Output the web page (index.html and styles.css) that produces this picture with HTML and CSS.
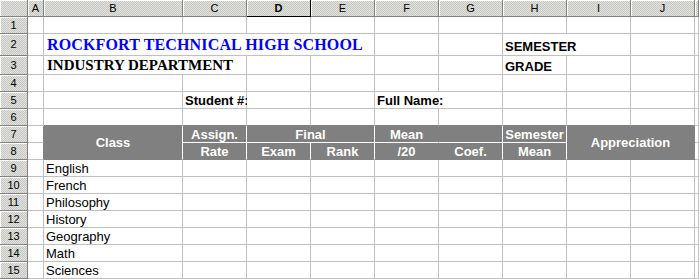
FILE: index.html
```html
<!DOCTYPE html>
<html>
<head>
<meta charset="utf-8">
<link rel="stylesheet" href="styles.css">
</head>
<body>
<div class="sheet">
  <div class="h corner"></div><div class="h">A</div><div class="h">B</div><div class="h">C</div><div class="h sel">D</div><div class="h">E</div><div class="h">F</div><div class="h">G</div><div class="h">H</div><div class="h">I</div><div class="h">J</div><div class="h"></div>

  <div class="r">1</div><div class="c"></div><div class="c"></div><div class="c"></div><div class="c"></div><div class="c"></div><div class="c"></div><div class="c"></div><div class="c"></div><div class="c"></div><div class="c"></div><div class="c"></div>

  <div class="r">2</div><div class="c"></div><div class="c s4 title">ROCKFORT TECHNICAL HIGH SCHOOL</div><div class="c"></div><div class="c"></div><div class="c s2 lbl up">SEMESTER</div><div class="c"></div><div class="c"></div>

  <div class="r">3</div><div class="c"></div><div class="c s2 dept">INDUSTRY DEPARTMENT</div><div class="c"></div><div class="c"></div><div class="c"></div><div class="c"></div><div class="c lbl">GRADE</div><div class="c"></div><div class="c"></div><div class="c"></div>

  <div class="r">4</div><div class="c"></div><div class="c"></div><div class="c"></div><div class="c"></div><div class="c"></div><div class="c"></div><div class="c"></div><div class="c"></div><div class="c"></div><div class="c"></div><div class="c"></div>

  <div class="r">5</div><div class="c"></div><div class="c"></div><div class="c lbl">Student #:</div><div class="c"></div><div class="c"></div><div class="c s2 lbl">Full Name:</div><div class="c"></div><div class="c"></div><div class="c"></div><div class="c"></div>

  <div class="r">6</div><div class="c"></div><div class="c ab"></div><div class="c ab"></div><div class="c ab"></div><div class="c ab"></div><div class="c ab"></div><div class="c ab"></div><div class="c ab"></div><div class="c ab"></div><div class="c ab"></div><div class="c"></div>

  <div class="r">7</div><div class="c ar"></div><div class="g rs2 mid nb">Class</div><div class="g">Assign.</div><div class="g s2">Final</div><div class="g nr">Mean</div><div class="g"></div><div class="g">Semester</div><div class="g s2 rs2 mid nr nb">Appreciation</div><div class="c"></div>

  <div class="r">8</div><div class="c ar"></div><div class="g nb">Rate</div><div class="g nb">Exam</div><div class="g nb">Rank</div><div class="g nb nr">/20</div><div class="g nb">Coef.</div><div class="g nb">Mean</div><div class="c"></div>

  <div class="r">9</div><div class="c"></div><div class="c">English</div><div class="c"></div><div class="c"></div><div class="c"></div><div class="c"></div><div class="c"></div><div class="c"></div><div class="c"></div><div class="c"></div><div class="c"></div>

  <div class="r">10</div><div class="c"></div><div class="c">French</div><div class="c"></div><div class="c"></div><div class="c"></div><div class="c"></div><div class="c"></div><div class="c"></div><div class="c"></div><div class="c"></div><div class="c"></div>

  <div class="r">11</div><div class="c"></div><div class="c">Philosophy</div><div class="c"></div><div class="c"></div><div class="c"></div><div class="c"></div><div class="c"></div><div class="c"></div><div class="c"></div><div class="c"></div><div class="c"></div>

  <div class="r">12</div><div class="c"></div><div class="c">History</div><div class="c"></div><div class="c"></div><div class="c"></div><div class="c"></div><div class="c"></div><div class="c"></div><div class="c"></div><div class="c"></div><div class="c"></div>

  <div class="r">13</div><div class="c"></div><div class="c">Geography</div><div class="c"></div><div class="c"></div><div class="c"></div><div class="c"></div><div class="c"></div><div class="c"></div><div class="c"></div><div class="c"></div><div class="c"></div>

  <div class="r">14</div><div class="c"></div><div class="c">Math</div><div class="c"></div><div class="c"></div><div class="c"></div><div class="c"></div><div class="c"></div><div class="c"></div><div class="c"></div><div class="c"></div><div class="c"></div>

  <div class="r">15</div><div class="c"></div><div class="c">Sciences</div><div class="c"></div><div class="c"></div><div class="c"></div><div class="c"></div><div class="c"></div><div class="c"></div><div class="c"></div><div class="c"></div><div class="c"></div>
</div>
</body>
</html>
```

FILE: styles.css
```css
html, body {
  margin: 0;
  padding: 0;
  background: #fff;
}
body {
  width: 699px;
  height: 279px;
  overflow: hidden;
}
.sheet {
  display: grid;
  grid-template-columns: 28px 16px 139px repeat(8, 64px) 4px;
  grid-template-rows: 17px 17px 22px 19px repeat(12, 17px);
  width: 699px;
  font-family: "Liberation Sans", Arial, sans-serif;
}
.sheet > div {
  box-sizing: border-box;
  min-width: 0;
  white-space: nowrap;
}
.h, .r {
  background: repeating-conic-gradient(#c6c6c2 0 25%, #e2e2de 0 50%) 0 0 / 2px 2px;
  border-right: 1px solid #808080;
  border-bottom: 1px solid #808080;
  box-shadow: inset 1px 1px 0 #fff;
  font-size: 11px;
  color: #000;
  display: flex;
  align-items: center;
  justify-content: center;
  line-height: 13px;
}
.h {
  box-shadow: inset 1px 1px 0 #fff, inset 0 1px 0 #808080;
}
.h.sel {
  font-weight: bold;
  border-right-color: #000;
  border-bottom-color: #000;
}
.c {
  background: #fff;
  border-right: 1px solid #c0c0c0;
  border-bottom: 1px solid #c0c0c0;
  display: flex;
  align-items: flex-end;
  padding-left: 2px;
  font-size: 13px;
  line-height: 15px;
  color: #000;
}
.s2 { grid-column: span 2; }
.s4 { grid-column: span 4; }
.rs2 { grid-row: span 2; }
.ab { border-bottom-color: #808080; }
.ar { border-right-color: #808080; }
.title {
  font-family: "Liberation Serif", "Times New Roman", serif;
  font-weight: bold;
  font-size: 16px;
  line-height: 20px;
  color: #0000ff;
  padding-left: 3px;
  letter-spacing: 0.15px;
}
.dept {
  font-family: "Liberation Serif", "Times New Roman", serif;
  font-weight: bold;
  font-size: 15px;
  line-height: 17px;
  padding-left: 3px;
}
.lbl {
  font-weight: bold;
}
.up {
  padding-bottom: 1px;
}
.g {
  background: #808080;
  color: #fff;
  font-weight: bold;
  font-size: 13px;
  line-height: 15px;
  border-right: 1px solid #fff;
  border-bottom: 1px solid #fff;
  display: flex;
  align-items: flex-end;
  justify-content: center;
}
.g.nr { border-right-color: #808080; }
.g.nb { border-bottom-color: #808080; }
.g.mid { align-items: center; }
```
